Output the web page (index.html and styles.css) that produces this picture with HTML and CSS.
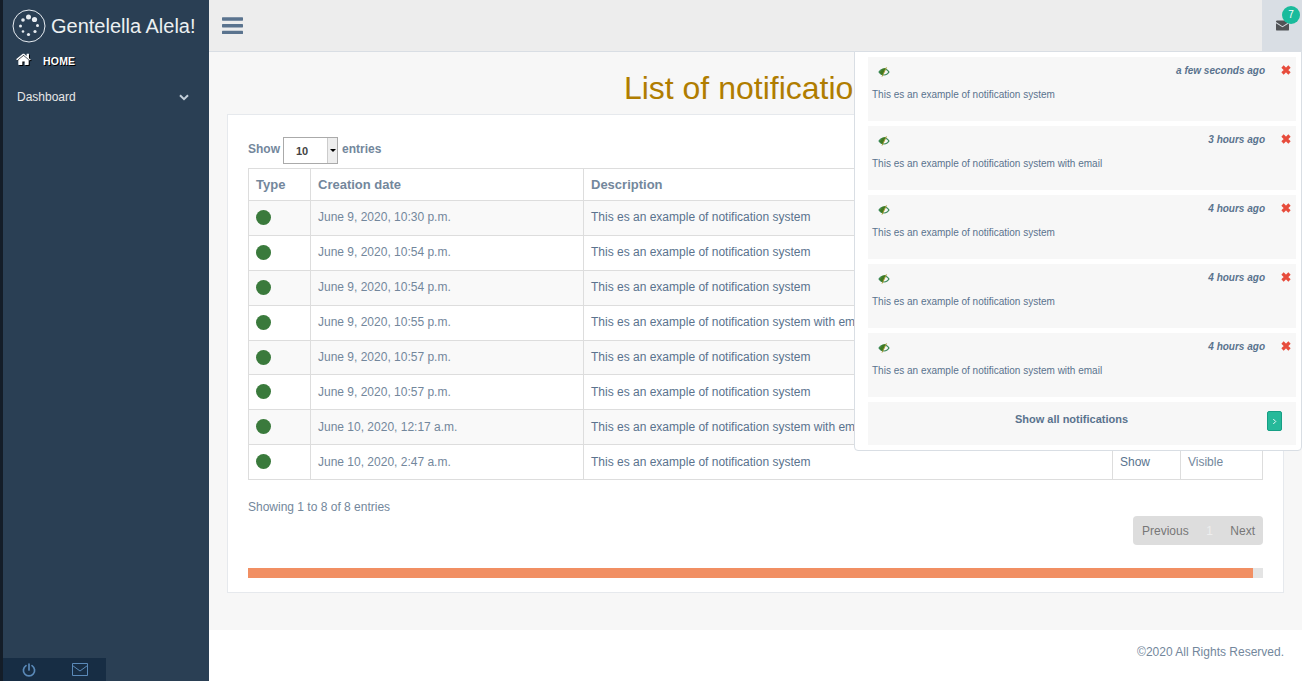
FILE: index.html
```html
<!DOCTYPE html>
<html lang="en">
<head>
    <meta charset="UTF-8">
    <meta name="viewport" content="width=device-width, initial-scale=1.0">
    <title>List of notifications</title>
    <link rel="stylesheet" href="styles.css">
</head>
<body>
    <svg class="sprites" width="0" height="0">
        <symbol id="eye" viewBox="0 0 12 10">
            <path fill="#3c8a5a" d="M6 1.500C3.400 1.500 1.300 3.200.3 5c1 1.800 3.100 3.500 5.700 3.500S10.700 6.800 11.700 5C10.700 3.200 8.600 1.500 6 1.500zm0 1c1.800 0 3.300 1 4.200 2.500C9.300 6.500 7.800 7.500 6 7.500S2.700 6.500 1.800 5C2.700 3.500 4.200 2.500 6 2.500z"/>
            <path fill="#3f7a22" d="M1.500 5L4.500 1.800 8 .8 4.800 8.200 2.800 7z"/>
            <path d="M8.600.4L4 9.600" stroke="#a8962c" stroke-width=".9"/>
        </symbol>
        <symbol id="cross" viewBox="0 0 10 10">
            <path d="M1.500 1.500l7 7m0-7l-7 7" stroke="#e74c3c" stroke-width="3.200"/>
        </symbol>
    </svg>

    <div class="layout">
        <aside class="sidebar">
            <div class="brand">
                <svg class="brand-logo" viewBox="0 0 34 34" width="34" height="34">
                    <circle cx="17" cy="17" r="16" fill="none" stroke="#e7ecf1" stroke-width="1"/>
                    <g fill="#e7ecf1">
                        <circle cx="16.500" cy="8" r="2.500"/><circle cx="22.500" cy="10.500" r="2.600"/>
                        <circle cx="25.500" cy="16.500" r="1.500"/><circle cx="23" cy="22.500" r="1.600"/>
                        <circle cx="16.500" cy="25.500" r="1.600"/><circle cx="11" cy="22.500" r="1.300"/>
                        <circle cx="8.500" cy="17" r="1.500"/><circle cx="11" cy="11" r="1.800"/>
                    </g>
                </svg>
                <span class="brand-name">Gentelella Alela!</span>
            </div>
            <div class="menu-title">
                <svg class="home-icon" viewBox="0 0 1664 1408" width="15" height="13"><path fill="#fff" d="M1408 768v480q0 26-19 45t-45 19H960V928H704v384H320q-26 0-45-19t-19-45V768q0-1 .5-3t.5-3l575-474 575 474q1 2 1 6zm223-69l-62 74q-8 9-21 11h-3q-13 0-21-7L832 200 140 777q-12 8-24 7-13-2-21-11l-62-74q-8-10-7-23.500t11-21.500L756 79q32-26 76-26t76 26l272 227V88q0-14 9-23t23-9h192q14 0 23 9t9 23v472l219 182q10 8 11 21.500t-7 23.500z"/></svg>
                <span>HOME</span>
            </div>
            <div class="menu-item">
                <span>Dashboard</span>
                <svg viewBox="0 0 10 7" width="10" height="7"><path d="M1 1.200l4 4 4-4" fill="none" stroke="#c4cfda" stroke-width="2"/></svg>
            </div>
            <div class="sidebar-footer">
                <a class="footer-btn">
                    <svg viewBox="0 0 14 14" width="14" height="14"><path d="M4 2.600a5.600 5.600 0 1 0 6 0M7 1v6" fill="none" stroke="#5a89b8" stroke-width="1.700" stroke-linecap="round"/></svg>
                </a>
                <a class="footer-btn">
                    <svg viewBox="0 0 16 13" width="16" height="13"><path d="M.5.500h15v12H.5zM.5 2.500L8 8l7.500-5.500" fill="none" stroke="#5a89b8" stroke-width="1"/></svg>
                </a>
            </div>
        </aside>

        <div class="main">
            <header class="topbar">
                <a class="toggle">
                    <svg viewBox="0 0 21 17" width="21" height="17"><g fill="#5A738E"><rect y=".3" width="21" height="3.400" rx=".6"/><rect y="7" width="21" height="3.400" rx=".6"/><rect y="13.700" width="21" height="3.400" rx=".6"/></g></svg>
                </a>
                <a class="mail-btn">
                    <svg viewBox="0 0 14 11" width="13" height="11"><path fill="#515356" d="M0 1.300Q0 0 1.300 0h11.400Q14 0 14 1.300v.4L7 6.200 0 1.700zM0 3.100l7 4.400 7-4.400v6.600q0 1.300-1.300 1.300H1.300Q0 11 0 9.700z"/></svg>
                    <span class="badge">7</span>
                </a>
            </header>

            <main class="content">
                <h1 class="page-title">List of notifications</h1>
                <section class="panel">
                    <div class="length-row">
                        <b>Show</b>
                        <span class="fake-select"><span class="fake-value">10</span><span class="fake-arrow"></span></span>
                        <b>entries</b>
                    </div>
                    <table class="data-table">
                        <colgroup>
                            <col class="col-type"><col class="col-date"><col class="col-desc"><col class="col-show"><col class="col-state">
                        </colgroup>
                        <thead>
                            <tr><th>Type</th><th>Creation date</th><th>Description</th><th></th><th></th></tr>
                        </thead>
                        <tbody>
                            <tr><td><i class="dot"></i></td><td><a class="date">June 9, 2020, 10:30 p.m.</a></td><td><a>This es an example of notification system</a></td><td><a>Show</a></td><td>Visible</td></tr>
                            <tr><td><i class="dot"></i></td><td><a class="date">June 9, 2020, 10:54 p.m.</a></td><td><a>This es an example of notification system</a></td><td><a>Show</a></td><td>Visible</td></tr>
                            <tr><td><i class="dot"></i></td><td><a class="date">June 9, 2020, 10:54 p.m.</a></td><td><a>This es an example of notification system</a></td><td><a>Show</a></td><td>Visible</td></tr>
                            <tr><td><i class="dot"></i></td><td><a class="date">June 9, 2020, 10:55 p.m.</a></td><td><a>This es an example of notification system with email</a></td><td><a>Show</a></td><td>Visible</td></tr>
                            <tr><td><i class="dot"></i></td><td><a class="date">June 9, 2020, 10:57 p.m.</a></td><td><a>This es an example of notification system</a></td><td><a>Show</a></td><td>Visible</td></tr>
                            <tr><td><i class="dot"></i></td><td><a class="date">June 9, 2020, 10:57 p.m.</a></td><td><a>This es an example of notification system</a></td><td><a>Show</a></td><td>Visible</td></tr>
                            <tr><td><i class="dot"></i></td><td><a class="date">June 10, 2020, 12:17 a.m.</a></td><td><a>This es an example of notification system with email</a></td><td><a>Show</a></td><td>Visible</td></tr>
                            <tr><td><i class="dot"></i></td><td><a class="date">June 10, 2020, 2:47 a.m.</a></td><td><a>This es an example of notification system</a></td><td><a>Show</a></td><td>Visible</td></tr>
                        </tbody>
                    </table>
                    <div class="table-info">Showing 1 to 8 of 8 entries</div>
                    <div class="pager-row">
                        <div class="pager"><span>Previous</span><span class="pager-current">1</span><span>Next</span></div>
                    </div>
                    <div class="progress"><div class="progress-bar" style="width: 99%"></div></div>
                </section>
            </main>

            <footer class="page-footer">©2020 All Rights Reserved.</footer>
        </div>
    </div>

    <div class="dropdown">
        <div class="note">
            <div class="note-head">
                <svg class="eye" width="12" height="10"><use href="#eye"/></svg>
                <em>a few seconds ago</em>
                <svg class="close" width="10" height="10"><use href="#cross"/></svg>
            </div>
            <p>This es an example of notification system</p>
        </div>
        <div class="note">
            <div class="note-head">
                <svg class="eye" width="12" height="10"><use href="#eye"/></svg>
                <em>3 hours ago</em>
                <svg class="close" width="10" height="10"><use href="#cross"/></svg>
            </div>
            <p>This es an example of notification system with email</p>
        </div>
        <div class="note">
            <div class="note-head">
                <svg class="eye" width="12" height="10"><use href="#eye"/></svg>
                <em>4 hours ago</em>
                <svg class="close" width="10" height="10"><use href="#cross"/></svg>
            </div>
            <p>This es an example of notification system</p>
        </div>
        <div class="note">
            <div class="note-head">
                <svg class="eye" width="12" height="10"><use href="#eye"/></svg>
                <em>4 hours ago</em>
                <svg class="close" width="10" height="10"><use href="#cross"/></svg>
            </div>
            <p>This es an example of notification system</p>
        </div>
        <div class="note">
            <div class="note-head">
                <svg class="eye" width="12" height="10"><use href="#eye"/></svg>
                <em>4 hours ago</em>
                <svg class="close" width="10" height="10"><use href="#cross"/></svg>
            </div>
            <p>This es an example of notification system with email</p>
        </div>
        <div class="show-all">
            <b>Show all notifications</b>
            <a class="go-btn"><svg viewBox="0 0 6 8" width="5" height="7"><path d="M1.500 1l3 3-3 3" fill="none" stroke="#fff" stroke-width="1.100"/></svg></a>
        </div>
    </div>
</body>
</html>
```

FILE: styles.css
```css
* { box-sizing: border-box; }

html, body {
    margin: 0;
    height: 100%;
    overflow: hidden;
}

body {
    font-family: "Liberation Sans", Arial, sans-serif;
    font-size: 12px;
    color: #73879C;
    background-color: #2A3F54;
}

.sprites { position: absolute; }

.layout {
    display: flex;
    height: 681px;
}

/* sidebar */
.sidebar {
    width: 209px;
    flex: none;
    background-color: #2A3F54;
    border-left: 3px solid #141d28;
    display: flex;
    flex-direction: column;
}

.brand {
    height: 50px;
    padding: 9px 0 0 9px;
    display: flex;
    align-items: flex-start;
}

.brand-logo { flex: none; }

.brand-name {
    color: #ECF0F1;
    font-size: 20px;
    line-height: 34px;
    margin-left: 5px;
    white-space: nowrap;
}

.menu-title {
    height: 32px;
    padding-left: 13px;
    display: flex;
    align-items: flex-start;
    color: #fff;
    font-size: 10.500px;
    font-weight: bold;
    letter-spacing: 0.2px;
    text-shadow: 1px 1px #000;
}

.menu-title span {
    margin: 5px 0 0 12px;
}

.home-icon {
    margin-top: 3px;
    filter: drop-shadow(1px 1px 0 #000);
}

.menu-item {
    height: 30px;
    padding: 0 20px 0 14px;
    display: flex;
    align-items: center;
    justify-content: space-between;
    color: #E7E7E7;
}

.sidebar-footer {
    margin-top: auto;
    width: 103px;
    height: 23px;
    background-color: #172D44;
    display: flex;
}

.footer-btn {
    flex: 1;
    display: flex;
    align-items: center;
    justify-content: center;
}

/* top bar */
.main {
    flex: 1;
    min-width: 0;
    display: flex;
    flex-direction: column;
    background-color: #F7F7F7;
}

.topbar {
    height: 52px;
    flex: none;
    background-color: #EDEDED;
    border-bottom: 1px solid #D9DEE4;
    display: flex;
    justify-content: space-between;
}

.toggle {
    padding: 17px 0 0 13px;
    width: 50px;
}

.mail-btn {
    position: relative;
    width: 40px;
    background-color: #D9DEE4;
    display: flex;
    align-items: center;
    justify-content: center;
}

.badge {
    position: absolute;
    top: 6px;
    right: 2px;
    width: 18px;
    height: 18px;
    border-radius: 50%;
    background-color: #1ABB9C;
    color: #fff;
    font-size: 10px;
    line-height: 18px;
    text-align: center;
}

/* content */
.content {
    flex: 1;
    padding: 0 18px;
}

.page-title {
    margin: 0;
    height: 62px;
    padding-top: 17px;
    color: #B07D00;
    font-size: 32px;
    line-height: 38px;
    font-weight: normal;
    text-align: center;
}

.panel {
    height: 479px;
    background-color: #fff;
    border: 1px solid #E6E9ED;
    padding: 0 20px;
}

.length-row {
    height: 53px;
    padding-top: 22px;
    display: flex;
    align-items: flex-start;
    gap: 3px;
}

.length-row b { margin-top: 5px; }

.length-row b:last-child { margin-left: 1px; }

.fake-select {
    width: 55px;
    height: 27px;
    border: 1px solid #aaa;
    display: flex;
    color: #444;
    font-size: 11px;
    font-weight: bold;
}

.fake-value {
    flex: 1;
    line-height: 26px;
    padding-left: 12px;
}

.fake-arrow {
    width: 10px;
    background-color: #eee;
    border-left: 1px solid #ccc;
    position: relative;
}

.fake-arrow::after {
    content: "";
    position: absolute;
    top: 11px;
    left: 2px;
    border: 3px solid transparent;
    border-top-color: #000;
}

.data-table {
    width: 100%;
    table-layout: fixed;
    border-collapse: collapse;
}

.col-type { width: 62px; }
.col-date { width: 273px; }
.col-show { width: 68px; }
.col-state { width: 82px; }

.data-table th,
.data-table td {
    border: 1px solid #DDD;
    padding: 0 7px;
    text-align: left;
    white-space: nowrap;
    overflow: hidden;
}

.data-table th {
    height: 32px;
    font-size: 13px;
    font-weight: bold;
}

.data-table td {
    height: 34.9px;
    padding-bottom: 1px;
}

.data-table tbody tr:nth-child(odd) { background-color: #F9F9F9; }

.data-table a { color: #5A738E; }

.data-table a.date { color: #73879C; }

.dot {
    display: block;
    width: 15px;
    height: 15px;
    border-radius: 50%;
    background-color: #3A7A3C;
}

.table-info {
    margin-top: 20px;
    line-height: 14px;
}

.pager-row {
    display: flex;
    justify-content: flex-end;
    margin-top: 2px;
}

.pager {
    width: 130px;
    height: 29px;
    background-color: #DDD;
    border-radius: 4px;
    display: flex;
    align-items: center;
    justify-content: space-between;
    padding: 0 8px 0 9px;
    color: #777;
}

.pager-current { color: #eee; }

.progress {
    margin-top: 23px;
    height: 10px;
    background-color: #E4E4E4;
}

.progress-bar {
    height: 100%;
    background-color: #F18F63;
}

.page-footer {
    height: 51px;
    flex: none;
    background-color: #fff;
    padding: 15px 18px 0;
    text-align: right;
}

/* notifications dropdown */
.dropdown {
    position: absolute;
    top: 51px;
    left: 854px;
    width: 448px;
    height: 400px;
    background-color: #fff;
    border: 1px solid #D9DEE4;
    border-radius: 0 0 4px 4px;
    padding: 5px 5px 5px 13px;
    font-size: 10px;
}

.note {
    height: 64px;
    margin-bottom: 5px;
    background-color: #F7F7F7;
}

.note-head {
    display: flex;
    align-items: flex-start;
    height: 25px;
    padding: 8px 5px 0 10px;
}

.eye { margin-top: 2px; }

.note-head em {
    margin-left: auto;
    font-weight: bold;
    color: #5A738E;
    line-height: 11px;
}

.close { margin-left: 16px; }

.note p {
    margin: 7px 0 0;
    padding-left: 4px;
    line-height: 12px;
    color: #5A738E;
}

.show-all {
    height: 43px;
    background-color: #F7F7F7;
    position: relative;
    display: flex;
    padding: 11px 21px 0 0;
    justify-content: center;
    font-size: 11px;
    color: #5A738E;
}

.go-btn {
    position: absolute;
    top: 9px;
    right: 14px;
    width: 15px;
    height: 20px;
    background-color: #26B99A;
    border: 1px solid #169F85;
    border-radius: 2px;
    display: flex;
    align-items: center;
    justify-content: center;
}
```
